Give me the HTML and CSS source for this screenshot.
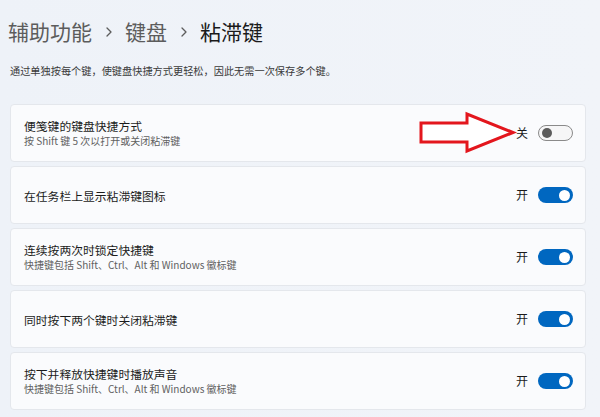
FILE: index.html
```html
<!DOCTYPE html>
<html lang="zh-CN">
<head>
<meta charset="utf-8">
<link rel="stylesheet" href="styles.css">
</head>
<body>
<div class="page">
  <h1 class="crumbs">
    <span class="crumb">辅助功能</span>
    <svg class="chev" viewBox="0 0 6 10" width="6" height="10"><path d="M1 1 L5 5 L1 9" fill="none" stroke="#5c5c5c" stroke-width="1.3" stroke-linecap="round" stroke-linejoin="round"/></svg>
    <span class="crumb">键盘</span>
    <svg class="chev" viewBox="0 0 6 10" width="6" height="10"><path d="M1 1 L5 5 L1 9" fill="none" stroke="#5c5c5c" stroke-width="1.3" stroke-linecap="round" stroke-linejoin="round"/></svg>
    <span class="crumb current">粘滞键</span>
  </h1>
  <p class="intro">通过单独按每个键，使键盘快捷方式更轻松，因此无需一次保存多个键。</p>

  <div class="list">
    <div class="card">
      <div class="text">
        <div class="title">便笺键的键盘快捷方式</div>
        <div class="sub">按 Shift 键 5 次以打开或关闭粘滞键</div>
      </div>
      <div class="ctrl">
        <span class="state">关</span>
        <span class="toggle off"><span class="knob"></span></span>
      </div>
    </div>
    <div class="card">
      <div class="text">
        <div class="title">在任务栏上显示粘滞键图标</div>
      </div>
      <div class="ctrl">
        <span class="state">开</span>
        <span class="toggle on"><span class="knob"></span></span>
      </div>
    </div>
    <div class="card">
      <div class="text">
        <div class="title">连续按两次时锁定快捷键</div>
        <div class="sub">快捷键包括 Shift、Ctrl、Alt 和 Windows 徽标键</div>
      </div>
      <div class="ctrl">
        <span class="state">开</span>
        <span class="toggle on"><span class="knob"></span></span>
      </div>
    </div>
    <div class="card">
      <div class="text">
        <div class="title">同时按下两个键时关闭粘滞键</div>
      </div>
      <div class="ctrl">
        <span class="state">开</span>
        <span class="toggle on"><span class="knob"></span></span>
      </div>
    </div>
    <div class="card">
      <div class="text">
        <div class="title">按下并释放快捷键时播放声音</div>
        <div class="sub">快捷键包括 Shift、Ctrl、Alt 和 Windows 徽标键</div>
      </div>
      <div class="ctrl">
        <span class="state">开</span>
        <span class="toggle on"><span class="knob"></span></span>
      </div>
    </div>
  </div>

  <svg class="arrow" viewBox="0 0 100 46" width="100" height="46">
    <polygon points="3,13 49,13 49,4 95,22.5 49,41 49,32 3,32" fill="#ffffff" stroke="#e3161d" stroke-width="3" stroke-linejoin="miter"/>
  </svg>
</div>
</body>
</html>
```

FILE: styles.css
```css
* { box-sizing: border-box; }
html, body {
  margin: 0;
  padding: 0;
}
body {
  width: 600px;
  height: 417px;
  overflow: hidden;
  background: linear-gradient(90deg, #eef2f8 0%, #f1f4f9 100%);
  font-family: "Noto Sans CJK SC", "Noto Sans", sans-serif;
  color: #1b1b1b;
}
.page {
  position: relative;
  padding: 0 14px 0 10px;
}
.crumbs {
  margin: 0 0 0 -2px;
  padding: 16px 0 0 0;
  height: 46px;
  display: flex;
  align-items: center;
  font-size: 21px;
  font-weight: 400;
  line-height: 30px;
}
.crumb { color: #5c5c5c; }
.crumb.current { color: #1a1a1a; }
.chev {
  margin: 2px 13px 0 14px;
}
.intro {
  margin: 17px 0 0 0;
  font-size: 10.2px;
  line-height: 16px;
  color: #3a3a3a;
  height: 16px;
}
.list {
  margin-top: 25px;
  display: flex;
  flex-direction: column;
  gap: 4px;
}
.card {
  height: 58px;
  background: #fafbfd;
  border: 1px solid #e4e7ec;
  border-radius: 4px;
  display: flex;
  align-items: center;
  justify-content: space-between;
  padding: 0 12px 0 13px;
}
.text {
  display: flex;
  flex-direction: column;
}
.title {
  font-size: 11.8px;
  line-height: 15px;
  color: #1b1b1b;
}
.sub {
  font-size: 10px;
  line-height: 15px;
  color: #616161;
}
.ctrl {
  display: flex;
  align-items: center;
}
.state {
  font-size: 12px;
  line-height: 16px;
  color: #1b1b1b;
  margin-right: 10px;
}
.toggle {
  width: 35px;
  height: 16px;
  border-radius: 8px;
  display: flex;
  align-items: center;
}
.toggle.on {
  background: #0067c0;
  justify-content: flex-end;
  padding-right: 3px;
}
.toggle.off {
  background: #f6f6f7;
  border: 1px solid #8a8a8a;
  padding-left: 3px;
}
.knob {
  width: 10px;
  height: 10px;
  border-radius: 50%;
}
.toggle.on .knob { background: #ffffff; width: 11px; height: 11px; }
.toggle.off .knob { background: #5b5b5b; }
.arrow {
  position: absolute;
  left: 418px;
  top: 110px;
}
```
